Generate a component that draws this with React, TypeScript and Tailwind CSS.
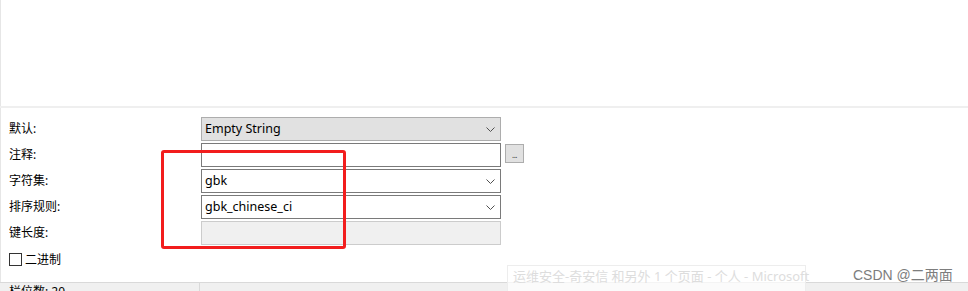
import React from "react";

const font = "font-['Noto_Sans','Noto_Sans_CJK_SC',sans-serif]";

function Chevron() {
  return (
    <svg width="9" height="5" viewBox="0 0 9 5" className="shrink-0">
      <polyline points="0.5,0.5 4.5,4.5 8.5,0.5" fill="none" stroke="#505050" strokeWidth="1" />
    </svg>
  );
}

function Combo({ value, gray }: { value: string; gray?: boolean }) {
  return (
    <div
      className={`w-[300px] h-full flex items-center justify-between pl-[3px] pr-[5px] border ${
        gray ? "bg-[#e1e1e1] border-[#adadad]" : "bg-white border-[#7a7a7a]"
      }`}
    >
      <span className="text-[12.5px] text-black leading-none">{value}</span>
      <Chevron />
    </div>
  );
}

function Row({ label, children }: { label: string; children: React.ReactNode }) {
  return (
    <div className="flex h-[24px] items-stretch">
      <div className="w-[200px] pl-[8px] flex items-center text-[12px] text-black">{label}</div>
      {children}
    </div>
  );
}

export default function App() {
  return (
    <div className={`relative w-[968px] h-[291px] overflow-hidden bg-white ${font}`}>
      <div className="h-[106px] border-l border-[#e6e6e6]" />
      <div className="h-[2px] bg-[#efefef]" />
      <div className="h-[174px] border-l border-[#e6e6e6] pt-[9px]">
        <div className="flex flex-col gap-[2px]">
          <Row label="默认:">
            <Combo value="Empty String" gray />
          </Row>
          <Row label="注释:">
            <div className="w-[300px] h-full bg-white border border-[#7a7a7a]" />
            <div className="ml-[4px] mt-[1px] w-[19px] h-[19px] bg-[#e1e1e1] border border-[#adadad] flex items-end justify-center pb-[3px]">
              <span className="text-[8px] leading-none text-[#333] tracking-[-0.5px]">...</span>
            </div>
          </Row>
          <Row label="字符集:">
            <Combo value="gbk" />
          </Row>
          <Row label="排序规则:">
            <Combo value="gbk_chinese_ci" />
          </Row>
          <Row label="键长度:">
            <div className="w-[300px] h-full bg-[#f0f0f0] border border-[#cccccc]" />
          </Row>
        </div>
        <div className="mt-[8px] pl-[8px] flex items-center h-[13px]">
          <div className="w-[13px] h-[13px] border border-[#333333] bg-white" />
          <span className="ml-[3px] text-[12px] text-black">二进制</span>
        </div>
      </div>
      <div className="h-px bg-[#d9d9d9]" />
      <div className="h-[8px] bg-[#f0f0f0] flex">
        <div className="w-[200px] border-r border-[#d9d9d9] pl-[9px] pt-[1px] text-[12px] leading-[16px] text-black">
          栏位数: 20
        </div>
      </div>

      {/* red annotation rectangle */}
      <div className="absolute left-[161px] top-[150px] w-[185px] h-[99px] border-[3px] border-[#f21d1d] rounded-[3px]" />

      {/* faded tooltip overlay */}
      <div className="absolute left-[507px] top-[265px] w-[299px] h-[32px] border border-[#ededed] bg-white/70 pl-[5px] pt-[1px] text-[13px] leading-[19px] text-[#dddddd] whitespace-nowrap">
        <div>运维安全-奇安信 和另外 1 个页面 - 个人 - Microsoft</div>
        <div>[...]</div>
      </div>

      {/* watermark */}
      <div className="absolute left-[853px] top-[265px] text-[14px] leading-[20px] text-[#7d7d7d] font-['Liberation_Sans','Noto_Sans_CJK_SC',sans-serif] whitespace-nowrap">
        CSDN @二两面
      </div>
    </div>
  );
}
